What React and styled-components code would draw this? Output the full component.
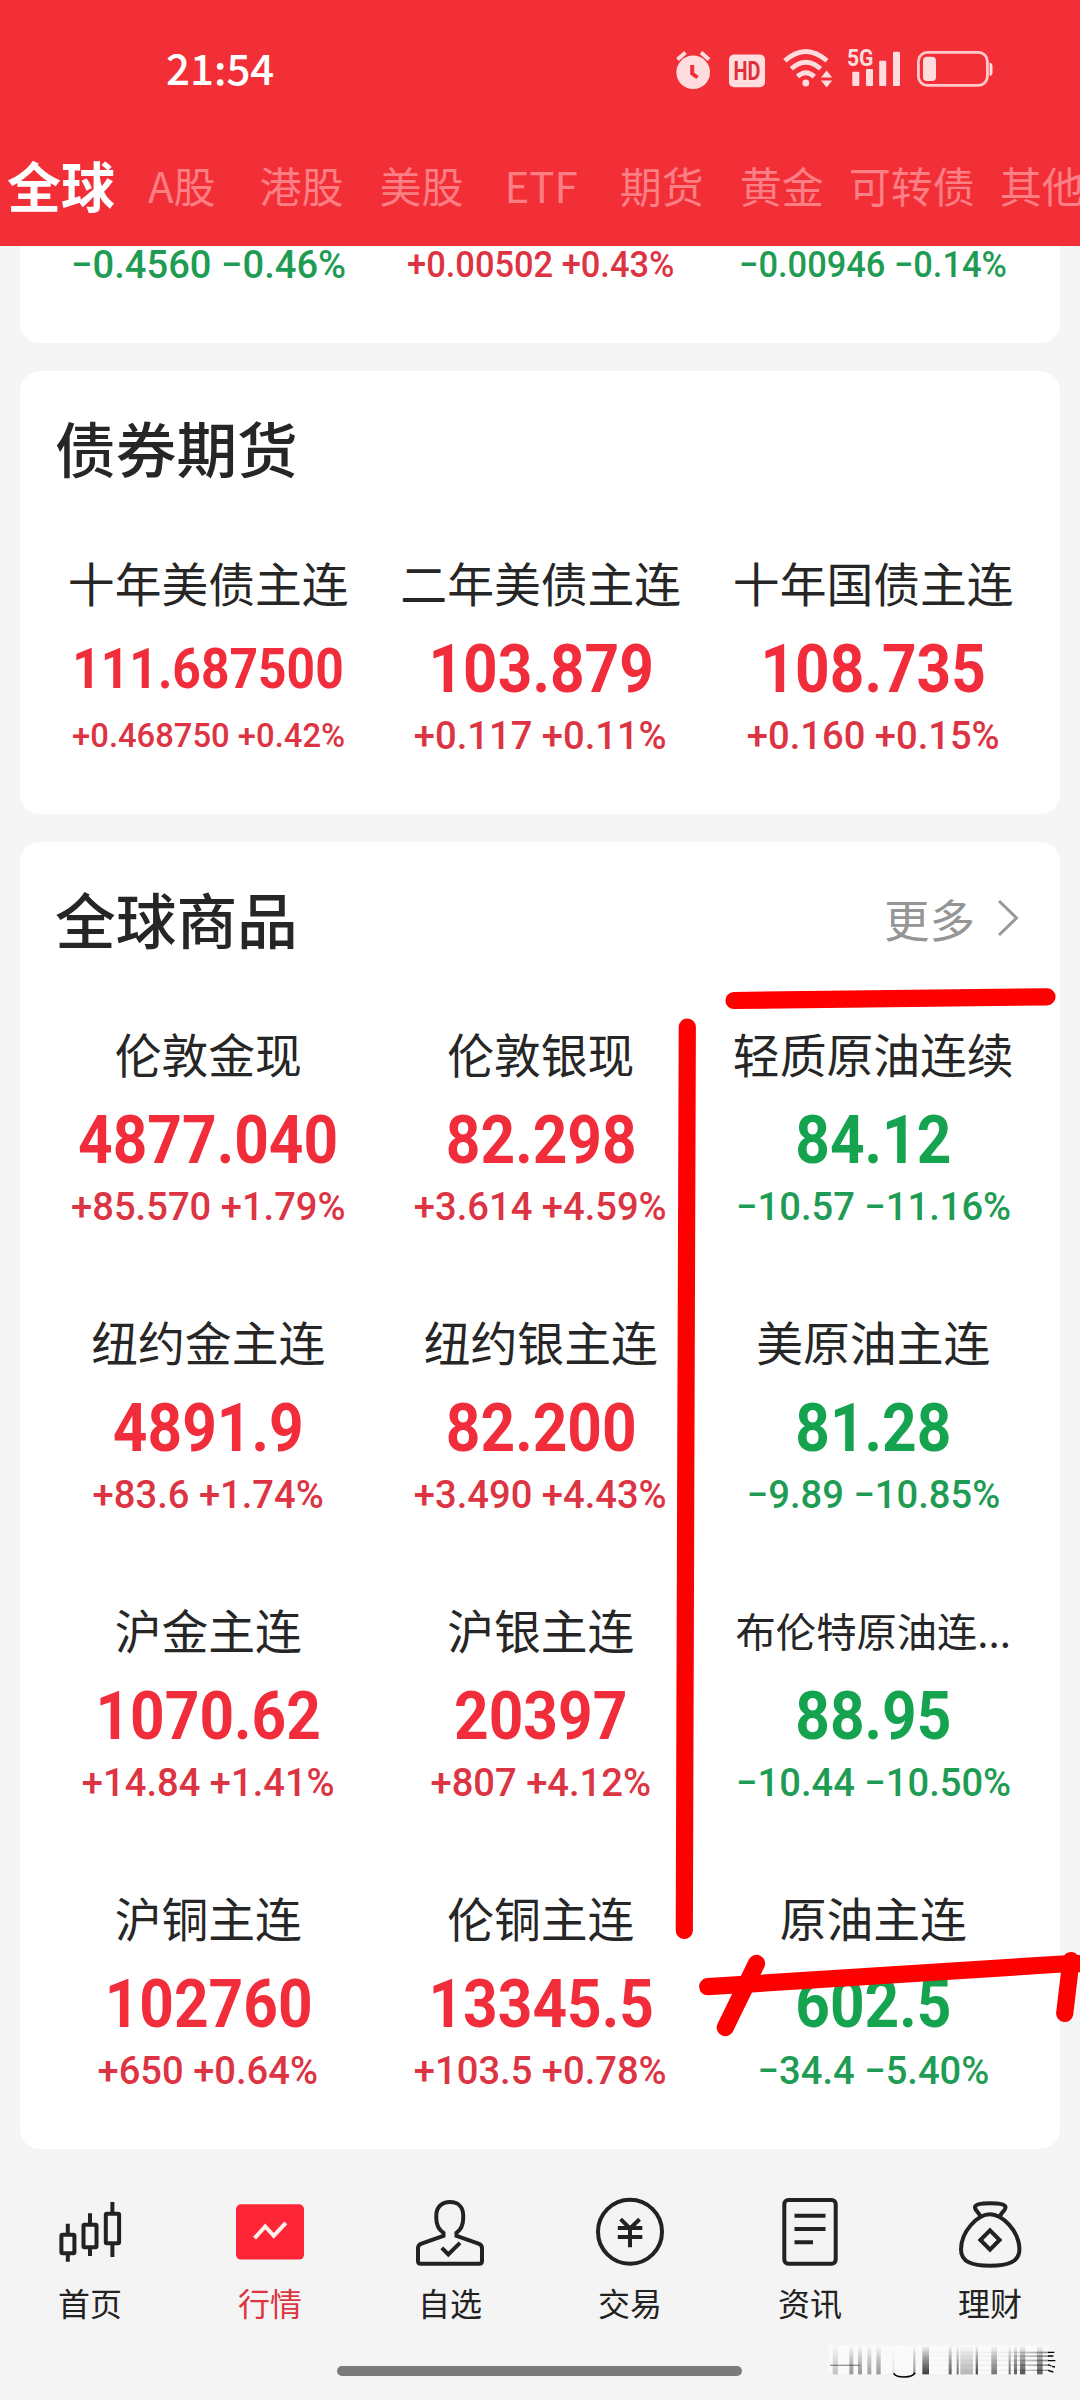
import React from 'react';
import styled, { createGlobalStyle } from 'styled-components';

const RED = '#f22d3b';
const GREEN = '#15a350';
const INK = '#262626';
const CJK = "'Noto Sans CJK SC', 'Noto Sans', sans-serif";

const GlobalStyle = createGlobalStyle`
  * { box-sizing: border-box; }
  body { margin: 0; background: #f5f5f5; }
`;

const Screen = styled.div`
  position: relative;
  display: flex;
  flex-direction: column;
  width: 1080px;
  height: 2400px;
  overflow: hidden;
  background: #f5f5f5;
  color: ${INK};
  font-family: ${CJK};
`;

const Header = styled.header`
  display: flex;
  flex-direction: column;
  height: 246px;
  flex: none;
  background: #f22f37;
`;

const StatusBar = styled.div`
  display: flex;
  align-items: center;
  justify-content: space-between;
  height: 138px;
  padding: 0 84px 0 166px;
`;

const Clock = styled.span`
  color: #fff;
  padding-bottom: 5px;
  font-size: 42px;
  font-weight: 500;
  line-height: 60px;
`;

const Tabs = styled.nav`
  display: flex;
  align-items: center;
  height: 94px;
  padding-left: 7px;
  white-space: nowrap;
  overflow: hidden;
`;

const Tab = styled.a`
  flex: none;
  margin-left: ${(p) => p.$gap}px;
  font-size: ${(p) => (p.$active ? 54 : 42)}px;
  font-weight: ${(p) => (p.$active ? 700 : 400)};
  line-height: 72px;
  color: ${(p) => (p.$active ? '#fff' : '#fb7f84')};
`;

const Main = styled.main`
  display: flex;
  flex-direction: column;
  gap: 28px;
  height: 1927px;
  flex: none;
  padding: 0 20px;
`;

const Card = styled.section`
  flex: none;
  padding-bottom: ${(p) => (p.$cut ? 61 : 49)}px;
  background: #fff;
  border-radius: ${(p) => (p.$cut ? '0 0 20px 20px' : '20px')};
`;

const CardHead = styled.div`
  display: flex;
  align-items: center;
  justify-content: space-between;
  height: 183px;
  padding: 36px 40px 67px 35px;
`;

const Title = styled.h2`
  margin: 0;
  font-size: 60.7px;
  font-weight: 500;
  line-height: 80px;
`;

const More = styled.a`
  display: flex;
  align-items: center;
  gap: 22px;
  color: #959595;
  font-size: 45.5px;
  font-weight: 400;
  line-height: 80px;
`;

const Grid = styled.div`
  display: grid;
  grid-template-columns: repeat(3, 332.5px);
  row-gap: 77px;
  padding: 0 20px 0 22px;
`;

const Cell = styled.div`
  display: flex;
  flex-direction: column;
  align-items: center;
  white-space: nowrap;
`;

const Name = styled.span`
  height: 60px;
  font-size: ${(p) => (p.$small ? 40.3 : 46.8)}px;
  line-height: ${(p) => (p.$small ? 58 : 55)}px;
`;

const Price = styled.span`
  height: 74px;
  margin-top: 17px;
  font-family: Roboto, sans-serif;
  font-size: ${(p) => (p.$small ? 55 : 66)}px;
  font-weight: 700;
  line-height: 77px;
  transform: scaleX(${(p) => (p.$small ? 0.905 : 0.915)});
  color: ${(p) => (p.$down ? GREEN : RED)};
`;

const Change = styled.span`
  height: ${(p) => (p.$cut ? 36 : 60)}px;
  font-family: Roboto, sans-serif;
  font-size: ${(p) => p.$size || 39}px;
  font-weight: 500;
  line-height: ${(p) => (p.$cut ? 38 : 62)}px;
  transform: scaleX(${(p) => (p.$cut && p.$size ? 0.943 : 0.978)});
  color: ${(p) => (p.$down ? '#1f9c54' : '#dc3443')};
`;

const BottomNav = styled.footer`
  display: flex;
  flex-direction: column;
  align-items: center;
  height: 227px;
  flex: none;
  padding-top: 23px;
  background: #f4f4f4;
`;

const NavRow = styled.div`
  display: grid;
  grid-template-columns: repeat(6, 180px);
`;

const NavItem = styled.a`
  display: flex;
  flex-direction: column;
  align-items: center;
  color: ${(p) => (p.$active ? '#dd3440' : '#222')};
`;

const NavLabel = styled.span`
  margin-top: 10px;
  height: 49px;
  font-size: 32px;
  line-height: 48px;
`;

const HomeBar = styled.div`
  width: 405px;
  height: 10px;
  margin: 39px 1px 0 0;
  border-radius: 5px;
  background: #7b7b7b;
`;

const Overlay = styled.svg`
  position: absolute;
  left: ${(p) => p.$x}px;
  top: ${(p) => p.$y}px;
  pointer-events: none;
`;

const StatusText = styled.text`
  font-family: Roboto, sans-serif;
  font-weight: 700;
`;

const TABS = [
  ['全球', 0], ['A股', 33], ['港股', 44], ['美股', 36], ['ETF', 41],
  ['期货', 42], ['黄金', 36], ['可转债', 25], ['其他', 25],
];

const BONDS = [
  { name: '十年美债主连', price: '111.687500', change: '+0.468750 +0.42%', small: true, size: 33.5 },
  { name: '二年美债主连', price: '103.879', change: '+0.117 +0.11%' },
  { name: '十年国债主连', price: '108.735', change: '+0.160 +0.15%' },
];

const GOODS = [
  { name: '伦敦金现', price: '4877.040', change: '+85.570 +1.79%' },
  { name: '伦敦银现', price: '82.298', change: '+3.614 +4.59%' },
  { name: '轻质原油连续', price: '84.12', change: '−10.57 −11.16%' },
  { name: '纽约金主连', price: '4891.9', change: '+83.6 +1.74%' },
  { name: '纽约银主连', price: '82.200', change: '+3.490 +4.43%' },
  { name: '美原油主连', price: '81.28', change: '−9.89 −10.85%' },
  { name: '沪金主连', price: '1070.62', change: '+14.84 +1.41%' },
  { name: '沪银主连', price: '20397', change: '+807 +4.12%' },
  { name: '布伦特原油连...', price: '88.95', change: '−10.44 −10.50%', smallName: true },
  { name: '沪铜主连', price: '102760', change: '+650 +0.64%' },
  { name: '伦铜主连', price: '13345.5', change: '+103.5 +0.78%' },
  { name: '原油主连', price: '602.5', change: '−34.4 −5.40%' },
];

function Quote({ item }) {
  const down = item.change.startsWith('−');
  return (
    <Cell>
      <Name $small={item.smallName}>{item.name}</Name>
      <Price $down={down} $small={item.small}>{item.price}</Price>
      <Change $down={down} $size={item.size}>{item.change}</Change>
    </Cell>
  );
}

function StatusIcons() {
  return (
    <svg width="324" height="64" viewBox="672 37 324 64" fill="#ffdcdd">
      <circle cx="693.2" cy="72.3" r="16.8" />
      <path d="M677.5 59.5 L685.5 52.5 M709 59.5 L701 52.5" stroke="#ffdcdd" strokeWidth="4" />
      <path d="M692.2 65 V73.5 L697.5 77.5" fill="none" stroke="#f22f37" strokeWidth="4" />
      <rect x="729" y="54.5" width="36" height="32.8" rx="5" />
      <StatusText x="747" y="79.8" textAnchor="middle" fontSize="25" fill="#e0303a" textLength="27" lengthAdjust="spacingAndGlyphs">HD</StatusText>
      <g fill="none" stroke="#ffdcdd" strokeWidth="4.8">
        <path d="M784.8 60.8 Q805.8 42 827 60.8" />
        <path d="M791.3 68.8 Q805.8 55.5 820.5 68.8" />
        <path d="M797.5 76.6 Q805.8 69 814.3 76.6" />
      </g>
      <circle cx="805.8" cy="83" r="3.4" />
      <path d="M821 77.5 L826.6 70.5 L832.2 77.5Z M821 80.5 L826.6 87.5 L832.2 80.5Z" />
      <StatusText x="847" y="66.3" fontSize="23.5" textLength="26.5" lengthAdjust="spacingAndGlyphs">5G</StatusText>
      <rect x="852.3" y="71.7" width="7" height="14.2" rx="1" />
      <rect x="866" y="69" width="7" height="16.9" rx="1" />
      <rect x="879.2" y="60.7" width="7" height="25.2" rx="1" />
      <rect x="893" y="51.7" width="7" height="34.2" rx="1" />
      <rect x="918.4" y="52.4" width="69" height="33" rx="9" fill="none" stroke="#ffc9cb" strokeWidth="2.8" />
      <rect x="923" y="56.8" width="13" height="24.2" rx="4" />
      <path d="M989.5 62.5 Q992.5 63 992.5 66 V72.5 Q992.5 75.5 989.5 76Z" />
    </svg>
  );
}

const ICONS = {
  首页: (
    <>
      <rect x="7.4" y="38.7" width="13" height="18.5" rx="1" />
      <path d="M13.8 27.7V38M13.8 58V65.7" />
      <rect x="29.5" y="28.8" width="13" height="22.4" rx="1" />
      <path d="M36 17.3V28M36 52V60" />
      <rect x="51.8" y="17.8" width="13.3" height="29.4" rx="1" />
      <path d="M58.4 6V17M58.4 48V61" />
    </>
  ),
  行情: (
    <>
      <rect x="2" y="8.2" width="68" height="55.4" rx="5" fill="#fe2636" stroke="none" />
      <path d="M20.6 42.2 L31.2 30.4 L39.8 39.8 L51.8 26.8" stroke="#fff0ee" />
    </>
  ),
  自选: (
    <>
      <path d="M29.5 39.8 V36.8 C24.5 33.5 22.3 28 22.3 22.5 V19.5 C22.3 11 28 6 36 6 C44 6 49.2 11 49.2 19.5 V22.5 C49.2 28 47 33.5 42.5 36.8 V39.8 L64.5 47.7 Q68 49 68 52 V65 Q68 67.7 65.3 67.7 H6.7 Q4 67.7 4 65 V52 Q4 49 7.5 47.7 Z" />
      <path d="M27.8 51.8 L34.3 58.4 L46 46.8" />
    </>
  ),
  交易: (
    <>
      <circle cx="36" cy="35.7" r="32" />
      <path d="M23.8 32H48.3M23.8 41H48.3M36 32V51.3M26.6 23.2L36 32.5L45.6 23.2" />
    </>
  ),
  资讯: (
    <>
      <rect x="10.3" y="4" width="51.4" height="63.8" rx="4" />
      <path d="M20.5 19.7H51.5M20.5 33H51.5M20.5 46.2H39" />
    </>
  ),
  理财: (
    <>
      <path d="M36 18.3C24 18.3 7 35 7 53.5C7 66 18 69.7 36 69.7C54 69.7 65.4 66 65.4 53.5C65.4 35 48 18.3 36 18.3Z" />
      <path d="M26.3 20C24 15.5 20.5 13.7 21 11C21.6 8 29 7.3 36 7.3C43 7.3 50.9 8 51.5 11C52 13.7 48.3 15.5 46 20" />
      <path d="M36 34.3L45.6 44L36 53.7L26.4 44Z" />
    </>
  ),
};

function NavIcon({ name }) {
  return (
    <svg width="72" height="72" viewBox="0 0 72 72" fill="none" stroke="#222" strokeWidth="4">
      {ICONS[name]}
    </svg>
  );
}

const STRIPES = [
  [158, 16, 0.25], [208, 12, 0.45], [234, 12, 0.45], [262, 12, 0.4], [289, 13, 0.45],
  [337, 6, 0.12], [400, 6, 0.5], [427, 20, 0.85], [506, 9, 0.7], [530, 6, 0.65],
  [541, 38, 0.3], [587, 7, 0.8], [634, 17, 0.6], [686, 6, 0.65], [702, 9, 0.7],
  [720, 16, 0.75], [771, 17, 0.7],
];

function Stamp() {
  return (
    <Overlay $x={780} $y={2320} width="300" height="80" viewBox="0 0 900 240">
      <defs>
        <linearGradient id="fade" x1="0" y1="0" x2="0" y2="1">
          <stop offset="0" stopColor="#000" stopOpacity="0" />
          <stop offset="0.45" stopColor="#000" stopOpacity="0.45" />
          <stop offset="1" stopColor="#000" stopOpacity="0.9" />
        </linearGradient>
        <linearGradient id="side" x1="0" y1="0" x2="1" y2="0">
          <stop offset="0" stopColor="#000" stopOpacity="0" />
          <stop offset="0.75" stopColor="#000" stopOpacity="0.05" />
          <stop offset="1" stopColor="#000" stopOpacity="0.45" />
        </linearGradient>
      </defs>
      <rect x="146" y="76" width="660" height="86" fill="#fff" opacity="0.5" />
      {STRIPES.map(([x, w, o]) => (
        <rect key={x} x={x} y="76" width={w} height="87" fill="url(#fade)" opacity={o} />
      ))}
      <g fill="url(#side)">
        <rect x="330" y="95" width="476" height="5" />
        <rect x="330" y="106" width="476" height="5" />
        <rect x="330" y="119" width="476" height="5" />
        <rect x="330" y="133" width="476" height="5" />
        <rect x="330" y="149" width="476" height="4" />
      </g>
      <path d="M150 136H240" stroke="#000" strokeWidth="4" opacity="0.4" />
      <path d="M341 160 Q347 171 373 171 Q399 171 405 158" fill="none" stroke="#000" strokeWidth="5" />
      <path d="M804 97H823M804 108H820M804 122H826M804 134L814 138M816 139L825 141M804 151L820 156" stroke="#000" strokeWidth="4" />
    </Overlay>
  );
}

function Marker() {
  return (
    <Overlay $x={0} $y={980} width="1080" height="1070" viewBox="0 980 1080 1070">
      <g fill="none" stroke="#fe0000" strokeWidth="17.2" strokeLinecap="round">
        <path d="M734 1000.5 L1047 996.8" />
        <path d="M687.3 1027 L686 1400 L684.3 1930.5" />
        <path d="M707.7 1986.7 L1062 1964 L1090 1963.5" />
        <path d="M756.5 1963.5 L725.3 2027.5" />
        <path d="M1071 1960.5 L1064.7 2013.5" />
      </g>
    </Overlay>
  );
}

export default function App() {
  return (
    <Screen>
      <GlobalStyle />
      <Header>
        <StatusBar>
          <Clock>21:54</Clock>
          <StatusIcons />
        </StatusBar>
        <Tabs>
          {TABS.map(([label, gap], i) => (
            <Tab key={label} $gap={gap} $active={i === 0}>{label}</Tab>
          ))}
        </Tabs>
      </Header>
      <Main>
        <Card $cut>
          <Grid>
            <Cell><Change $cut $down>−0.4560 −0.46%</Change></Cell>
            <Cell><Change $cut $size={36.5}>+0.00502 +0.43%</Change></Cell>
            <Cell><Change $cut $down $size={36.5}>−0.00946 −0.14%</Change></Cell>
          </Grid>
        </Card>
        <Card>
          <CardHead><Title>债券期货</Title></CardHead>
          <Grid>{BONDS.map((b) => <Quote key={b.name} item={b} />)}</Grid>
        </Card>
        <Card>
          <CardHead>
            <Title>全球商品</Title>
            <More>
              更多
              <svg width="23" height="38" viewBox="0 0 23 38" fill="none" stroke="#999" strokeWidth="3">
                <path d="M2 2L19.5 19L2 36" />
              </svg>
            </More>
          </CardHead>
          <Grid>{GOODS.map((g) => <Quote key={g.name} item={g} />)}</Grid>
        </Card>
      </Main>
      <BottomNav>
        <NavRow>
          {Object.keys(ICONS).map((name) => (
            <NavItem key={name} $active={name === '行情'}>
              <NavIcon name={name} />
              <NavLabel>{name}</NavLabel>
            </NavItem>
          ))}
        </NavRow>
        <HomeBar />
      </BottomNav>
      <Marker />
      <Stamp />
    </Screen>
  );
}
